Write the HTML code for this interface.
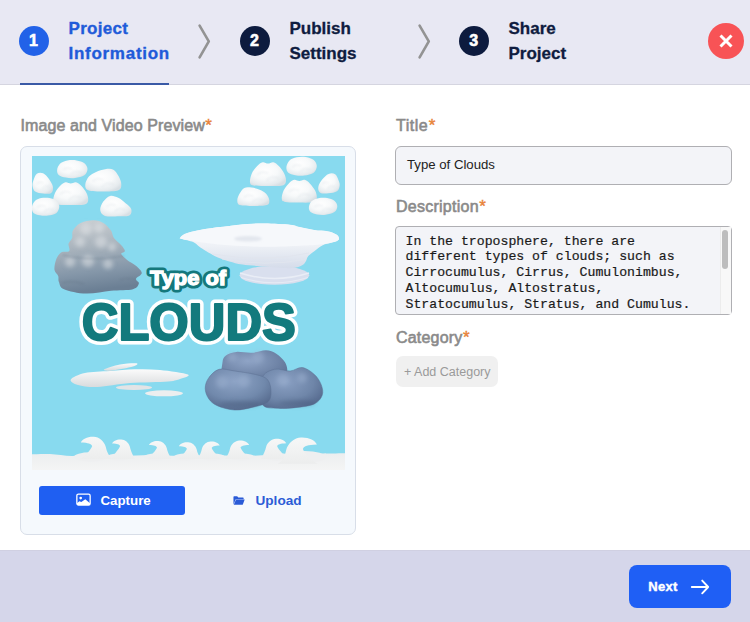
<!DOCTYPE html>
<html><head><meta charset="utf-8">
<style>
*{box-sizing:border-box;margin:0;padding:0}
html,body{width:750px;height:622px;overflow:hidden;background:#fff;font-family:"Liberation Sans",sans-serif}
.abs{position:absolute}
#hdr{left:0;top:0;width:750px;height:85px;background:#e8e8f3;border-bottom:1px solid #d5d5e0}
.circ{position:absolute;width:30px;height:30px;border-radius:50%;color:#fff;font-weight:bold;font-size:16px;line-height:30px;text-align:center;-webkit-text-stroke:0.6px #fff}
.step{position:absolute;font-weight:bold;font-size:17px;line-height:24.5px;white-space:nowrap;-webkit-text-stroke:0.3px currentColor}
.lbl{position:absolute;font-weight:normal;font-size:16px;line-height:20px;color:#8a8a8a;white-space:nowrap;-webkit-text-stroke:0.6px #8a8a8a}
.lbl i{font-style:normal;color:#e8843a;-webkit-text-stroke:0.4px #e8843a;font-size:17px;margin-left:0.5px}
#ftr{left:0;top:550px;width:750px;height:72px;background:#d5d6ea;border-top:1px solid #d0d0e2}
</style></head><body>
<div id="hdr" class="abs"></div>
<div class="circ" style="left:18.5px;top:25.5px;background:#2262e8">1</div>
<div class="step" style="left:68.5px;top:17px;color:#1f5bd9;-webkit-text-stroke:0.35px #1f5bd9"><span style="letter-spacing:0.3px">Project</span><br><span style="letter-spacing:0.72px">Information</span></div>
<div class="abs" style="left:20px;top:83px;width:149px;height:2px;background:#3a5aa6"></div>
<svg class="abs" style="left:196px;top:22px" width="16" height="38" viewBox="0 0 16 38"><path d="M3.6 3.6 L12.8 19.3 L3.6 35.4" fill="none" stroke="#939393" stroke-width="2.6" stroke-linecap="round" stroke-linejoin="round"/></svg>
<div class="circ" style="left:239.5px;top:25.5px;background:#0d1b3e">2</div>
<div class="step" style="left:289.5px;top:17px;color:#0f1c3f">Publish<br>Settings</div>
<svg class="abs" style="left:416px;top:22px" width="16" height="38" viewBox="0 0 16 38"><path d="M3.6 3.6 L12.8 19.3 L3.6 35.4" fill="none" stroke="#939393" stroke-width="2.6" stroke-linecap="round" stroke-linejoin="round"/></svg>
<div class="circ" style="left:458.8px;top:25.5px;background:#0d1b3e">3</div>
<div class="step" style="left:508.5px;top:17px;color:#0f1c3f">Share<br>Project</div>
<div class="abs" style="left:707.8px;top:23px;width:36px;height:36px;border-radius:50%;background:#f85356"></div>
<svg class="abs" style="left:707.8px;top:23px" width="36" height="36" viewBox="0 0 36 36"><path d="M12.5 12.5 L23.5 23.5 M23.5 12.5 L12.5 23.5" stroke="#fff" stroke-width="3" stroke-linecap="butt"/></svg>

<div class="lbl" style="left:20.5px;top:115.5px"><span style="letter-spacing:0.1px">Image and Video Preview</span><i>*</i></div>
<div class="abs" style="left:20px;top:146px;width:336px;height:389px;border:1px solid #d8dee8;border-radius:7px;background:#f5f9fd"></div>
<div class="abs" id="pic" style="left:32px;top:156px;width:313px;height:314px;overflow:hidden"><svg width="313" height="314" viewBox="32 156 313 314">
<defs>
<linearGradient id="gw" x1="0" y1="0" x2="0" y2="1"><stop offset="0" stop-color="#ffffff"/><stop offset="0.55" stop-color="#f7f9fa"/><stop offset="1" stop-color="#d9dfe4"/></linearGradient>
<linearGradient id="gcb" x1="0" y1="0" x2="0.15" y2="1"><stop offset="0" stop-color="#cdd1d4"/><stop offset="0.4" stop-color="#aab4bd"/><stop offset="0.75" stop-color="#8597a9"/><stop offset="1" stop-color="#6b7f94"/></linearGradient>
<linearGradient id="gs" x1="0" y1="0" x2="0" y2="1"><stop offset="0" stop-color="#fafbfd"/><stop offset="0.5" stop-color="#eef1f6"/><stop offset="1" stop-color="#d5dcea"/></linearGradient>
<radialGradient id="gdk1" cx="0.4" cy="0.35" r="0.7"><stop offset="0" stop-color="#8fa4c6"/><stop offset="1" stop-color="#5f7497"/></radialGradient><radialGradient id="gdk2" cx="0.4" cy="0.35" r="0.75"><stop offset="0" stop-color="#8aa0c3"/><stop offset="0.6" stop-color="#6f86a9"/><stop offset="1" stop-color="#52668a"/></radialGradient><radialGradient id="gdk3" cx="0.45" cy="0.3" r="0.75"><stop offset="0" stop-color="#8ea4c6"/><stop offset="0.6" stop-color="#7189ac"/><stop offset="1" stop-color="#53678a"/></radialGradient><linearGradient id="gdk" x1="0" y1="0" x2="0.1" y2="1"><stop offset="0" stop-color="#8a9dbb"/><stop offset="0.5" stop-color="#687ea0"/><stop offset="1" stop-color="#4b5f80"/></linearGradient>
<linearGradient id="gst" x1="0" y1="0" x2="0" y2="1"><stop offset="0" stop-color="#fbfbfb"/><stop offset="1" stop-color="#d9dbdd"/></linearGradient>
<linearGradient id="gb" x1="0" y1="0" x2="0" y2="1"><stop offset="0" stop-color="#eceeef"/><stop offset="1" stop-color="#f5f5f5"/></linearGradient>
<linearGradient id="gwv" x1="0" y1="0" x2="0" y2="1"><stop offset="0" stop-color="#f6f7f7"/><stop offset="1" stop-color="#eceded"/></linearGradient>
<radialGradient id="gw2" cx="0.42" cy="0.38" r="0.68"><stop offset="0" stop-color="#ffffff"/><stop offset="0.5" stop-color="#f7f9fa"/><stop offset="0.85" stop-color="#e6ebee"/><stop offset="1" stop-color="#d8dfe4"/></radialGradient>
<filter id="bl" x="-50%" y="-50%" width="200%" height="200%"><feGaussianBlur stdDeviation="2.2"/></filter><filter id="bl1" x="-50%" y="-50%" width="200%" height="200%"><feGaussianBlur stdDeviation="0.8"/></filter>
<g id="cu"><circle cx="8" cy="16" r="7"/><circle cx="17" cy="10" r="9"/><circle cx="28" cy="11" r="8"/><circle cx="33" cy="17" r="6.5"/><ellipse cx="20" cy="19" rx="19" ry="6"/></g>
</defs>
<rect x="32" y="156" width="313" height="314" fill="#88daef"/>
<path d="M57.1,169.9 C57.3,167.9 58.5,165.2 60.2,163.6 C61.9,162.0 64.6,161.1 67.3,160.5 C70.1,160.0 73.8,159.9 76.7,160.4 C79.5,160.8 82.6,161.8 84.4,163.2 C86.2,164.7 87.5,167.0 87.5,169.0 C87.5,171.0 86.5,173.8 84.4,175.3 C82.3,176.8 78.2,177.6 75.1,178.0 C72.0,178.4 68.5,178.1 65.8,177.6 C63.1,177.2 60.4,176.6 59.0,175.3 C57.5,174.0 56.9,171.9 57.1,169.9Z" fill="url(#gw2)"/>
<g opacity="0.45" fill="none" stroke="#d3dbe1" stroke-width="1.2" filter="url(#bl1)"><path d="M62.7,169.9 q4.6,-3.6 9.3,-0.9"/><path d="M70.5,174.4 q4.6,-4.5 10.8,-1.8"/></g>
<path d="M33.2,181.0 C33.9,178.9 35.2,174.9 36.8,173.7 C38.4,172.4 41.1,172.4 43.1,173.2 C45.1,174.1 47.3,176.6 49.0,178.9 C50.6,181.2 52.6,184.5 53.0,186.9 C53.3,189.2 52.7,191.8 51.1,193.0 C49.4,194.1 45.8,193.8 43.1,193.6 C40.4,193.4 36.9,192.7 35.1,191.5 C33.4,190.3 32.9,188.0 32.6,186.2 C32.3,184.5 32.5,183.1 33.2,181.0Z" fill="url(#gw2)"/>
<g opacity="0.45" fill="none" stroke="#d3dbe1" stroke-width="1.2" filter="url(#bl1)"><path d="M36.8,184.2 q3.1,-4.2 6.3,-1.1"/><path d="M42.1,189.4 q3.1,-5.2 7.3,-2.1"/></g>
<path d="M53.2,201.4 C52.9,199.5 53.8,195.6 55.0,193.0 C56.1,190.4 58.5,187.6 60.2,185.8 C62.0,184.0 63.7,182.6 65.5,182.2 C67.2,181.8 69.0,183.4 70.7,183.4 C72.5,183.4 74.2,181.8 76.0,182.2 C77.7,182.6 79.5,184.0 81.2,185.8 C83.0,187.6 85.3,190.6 86.5,193.0 C87.6,195.4 88.5,198.3 88.2,200.2 C87.9,202.1 87.6,203.7 84.7,204.5 C81.8,205.3 75.4,205.0 70.7,205.0 C66.0,205.0 59.6,205.1 56.7,204.5 C53.8,203.9 53.5,203.3 53.2,201.4Z" fill="url(#gw2)"/>
<g opacity="0.45" fill="none" stroke="#d3dbe1" stroke-width="1.2" filter="url(#bl1)"><path d="M60.2,194.2 q5.2,-4.8 10.5,-1.2"/><path d="M69.0,200.2 q5.2,-6.0 12.2,-2.4"/></g>
<path d="M85.3,184.6 C85.4,182.3 87.1,178.7 88.9,176.6 C90.7,174.4 93.4,173.2 96.1,171.9 C98.8,170.7 102.2,169.6 105.1,169.2 C108.0,168.8 111.1,168.4 113.4,169.7 C115.7,170.9 117.5,174.1 118.8,176.6 C120.1,179.0 121.4,182.3 121.3,184.6 C121.2,186.9 121.4,189.2 118.4,190.3 C115.4,191.5 108.3,191.5 103.3,191.5 C98.3,191.5 91.2,191.5 88.2,190.3 C85.2,189.2 85.2,186.9 85.3,184.6Z" fill="url(#gw2)"/>
<g opacity="0.45" fill="none" stroke="#d3dbe1" stroke-width="1.2" filter="url(#bl1)"><path d="M92.5,181.2 q5.4,-4.6 10.8,-1.2"/><path d="M101.5,186.9 q5.4,-5.8 12.6,-2.3"/></g>
<path d="M31.9,207.5 C32.0,205.6 33.1,202.8 34.7,201.2 C36.2,199.6 38.6,198.7 41.1,198.1 C43.6,197.6 46.9,197.5 49.5,198.0 C52.1,198.4 54.9,199.4 56.5,200.8 C58.1,202.3 59.3,204.6 59.3,206.6 C59.3,208.6 58.4,211.4 56.5,212.9 C54.6,214.4 50.9,215.2 48.1,215.6 C45.3,216.0 42.1,215.7 39.7,215.2 C37.3,214.8 34.8,214.2 33.5,212.9 C32.2,211.6 31.7,209.4 31.9,207.5Z" fill="url(#gw2)"/>
<g opacity="0.45" fill="none" stroke="#d3dbe1" stroke-width="1.2" filter="url(#bl1)"><path d="M36.9,207.5 q4.2,-3.6 8.4,-0.9"/><path d="M43.9,212.0 q4.2,-4.5 9.8,-1.8"/></g>
<path d="M100.2,210.0 C99.9,207.6 101.6,203.9 103.3,201.6 C105.0,199.3 107.6,196.6 110.1,195.9 C112.6,195.3 115.6,196.6 118.2,197.8 C120.8,199.0 123.5,201.4 125.6,203.3 C127.8,205.1 130.5,207.0 131.2,209.0 C131.9,210.9 131.7,214.0 129.7,215.2 C127.6,216.5 122.9,216.2 118.8,216.3 C114.7,216.4 108.0,216.9 104.9,215.9 C101.8,214.8 100.5,212.4 100.2,210.0Z" fill="url(#gw2)"/>
<g opacity="0.45" fill="none" stroke="#d3dbe1" stroke-width="1.2" filter="url(#bl1)"><path d="M106.4,206.9 q4.6,-4.2 9.3,-1.1"/><path d="M114.2,212.1 q4.6,-5.2 10.8,-2.1"/></g>
<path d="M250.0,182.2 C249.7,180.2 250.6,176.2 251.8,173.5 C253.0,170.8 255.4,167.9 257.2,166.0 C259.0,164.1 260.8,162.7 262.6,162.2 C264.4,161.8 266.2,163.5 268.0,163.5 C269.8,163.5 271.6,161.8 273.4,162.2 C275.2,162.7 277.0,164.1 278.8,166.0 C280.6,167.9 283.0,171.0 284.2,173.5 C285.4,176.0 286.3,179.0 286.0,181.0 C285.7,183.0 285.4,184.7 282.4,185.5 C279.4,186.3 272.8,186.0 268.0,186.0 C263.2,186.0 256.6,186.1 253.6,185.5 C250.6,184.9 250.3,184.2 250.0,182.2Z" fill="url(#gw2)"/>
<g opacity="0.45" fill="none" stroke="#d3dbe1" stroke-width="1.2" filter="url(#bl1)"><path d="M257.2,174.8 q5.4,-5.0 10.8,-1.2"/><path d="M266.2,181.0 q5.4,-6.2 12.6,-2.5"/></g>
<path d="M286.4,167.0 C286.6,165.0 287.8,162.0 289.5,160.4 C291.2,158.8 293.9,157.7 296.7,157.2 C299.4,156.6 303.1,156.5 305.9,157.0 C308.8,157.5 311.9,158.5 313.7,160.0 C315.5,161.5 316.8,164.0 316.8,166.1 C316.8,168.2 315.8,171.2 313.7,172.8 C311.6,174.3 307.5,175.2 304.4,175.6 C301.3,176.0 297.8,175.7 295.1,175.2 C292.4,174.7 289.7,174.1 288.3,172.8 C286.8,171.4 286.2,169.1 286.4,167.0Z" fill="url(#gw2)"/>
<g opacity="0.45" fill="none" stroke="#d3dbe1" stroke-width="1.2" filter="url(#bl1)"><path d="M292.0,167.0 q4.6,-3.8 9.3,-1.0"/><path d="M299.8,171.8 q4.6,-4.8 10.8,-1.9"/></g>
<path d="M338.9,181.3 C338.2,179.3 336.9,175.5 335.2,174.3 C333.5,173.1 330.7,173.1 328.6,173.9 C326.5,174.7 324.2,177.1 322.4,179.3 C320.7,181.5 318.6,184.7 318.3,186.9 C317.9,189.1 318.5,191.6 320.2,192.7 C322.0,193.8 325.8,193.5 328.6,193.3 C331.4,193.1 335.1,192.5 337.0,191.3 C338.8,190.1 339.3,188.0 339.6,186.3 C339.9,184.6 339.7,183.3 338.9,181.3Z" fill="url(#gw2)"/>
<g opacity="0.45" fill="none" stroke="#d3dbe1" stroke-width="1.2" filter="url(#bl1)"><path d="M322.0,184.3 q3.3,-4.0 6.6,-1.0"/><path d="M327.5,189.3 q3.3,-5.0 7.7,-2.0"/></g>
<path d="M281.8,199.0 C281.5,197.1 282.4,193.2 283.6,190.6 C284.7,188.0 287.1,185.2 288.8,183.4 C290.6,181.6 292.3,180.2 294.1,179.8 C295.8,179.4 297.6,181.0 299.3,181.0 C301.1,181.0 302.8,179.4 304.6,179.8 C306.3,180.2 308.1,181.6 309.8,183.4 C311.6,185.2 313.9,188.2 315.1,190.6 C316.2,193.0 317.1,195.9 316.8,197.8 C316.5,199.7 316.2,201.3 313.3,202.1 C310.4,202.9 304.0,202.6 299.3,202.6 C294.6,202.6 288.2,202.7 285.3,202.1 C282.4,201.5 282.1,200.9 281.8,199.0Z" fill="url(#gw2)"/>
<g opacity="0.45" fill="none" stroke="#d3dbe1" stroke-width="1.2" filter="url(#bl1)"><path d="M288.8,191.8 q5.2,-4.8 10.5,-1.2"/><path d="M297.6,197.8 q5.2,-6.0 12.2,-2.4"/></g>
<path d="M269.3,200.3 C269.2,198.4 267.7,195.4 266.1,193.7 C264.5,191.9 262.1,190.9 259.7,189.8 C257.3,188.8 254.3,187.9 251.7,187.6 C249.1,187.3 246.4,186.9 244.3,187.9 C242.3,189.0 240.7,191.6 239.5,193.7 C238.4,195.7 237.2,198.4 237.3,200.3 C237.4,202.2 237.2,204.1 239.9,205.1 C242.5,206.0 248.8,206.0 253.3,206.0 C257.8,206.0 264.1,206.0 266.7,205.1 C269.4,204.1 269.4,202.2 269.3,200.3Z" fill="url(#gw2)"/>
<g opacity="0.45" fill="none" stroke="#d3dbe1" stroke-width="1.2" filter="url(#bl1)"><path d="M243.7,197.4 q4.8,-3.8 9.6,-1.0"/><path d="M251.7,202.2 q4.8,-4.8 11.2,-1.9"/></g>
<path d="M308.9,207.0 C309.1,205.2 310.2,202.6 311.8,201.1 C313.4,199.6 315.9,198.7 318.4,198.2 C321.0,197.7 324.5,197.6 327.2,198.0 C329.8,198.5 332.7,199.4 334.4,200.8 C336.1,202.1 337.3,204.3 337.3,206.2 C337.3,208.1 336.3,210.7 334.4,212.1 C332.5,213.6 328.6,214.3 325.7,214.7 C322.8,215.1 319.5,214.8 317.0,214.4 C314.5,213.9 312.0,213.4 310.6,212.1 C309.3,210.9 308.7,208.9 308.9,207.0Z" fill="url(#gw2)"/>
<g opacity="0.45" fill="none" stroke="#d3dbe1" stroke-width="1.2" filter="url(#bl1)"><path d="M314.1,207.0 q4.3,-3.4 8.7,-0.9"/><path d="M321.4,211.3 q4.3,-4.2 10.1,-1.7"/></g>
<path d="M72.9,230.5 C74.2,228.1 76.8,224.9 80.2,223.2 C83.6,221.5 89.5,220.3 93.4,220.3 C97.3,220.3 100.8,221.5 103.7,223.2 C106.6,224.9 109.3,228.1 111.0,230.5 C112.7,232.9 112.2,235.5 113.9,237.9 C115.6,240.3 119.5,243.0 121.3,245.2 C123.1,247.4 124.9,249.5 124.9,251.0 C124.9,252.5 120.9,252.5 121.3,254.0 C121.7,255.5 124.7,257.9 127.1,259.9 C129.5,261.8 133.4,263.5 135.9,265.7 C138.4,267.9 141.8,270.8 141.8,273.0 C141.8,275.2 136.4,277.2 135.9,278.9 C135.4,280.6 139.4,281.6 138.9,283.3 C138.4,285.0 137.7,288.0 133.0,289.2 C128.3,290.4 118.8,290.0 111.0,290.7 C103.2,291.4 93.8,293.9 86.0,293.6 C78.2,293.4 68.5,291.1 64.0,289.2 C59.5,287.2 59.9,284.1 58.9,281.9 C57.9,279.7 58.9,278.0 58.2,276.0 C57.5,274.0 54.9,272.8 54.5,270.1 C54.1,267.4 54.9,262.8 56.0,259.9 C57.1,257.0 58.9,254.0 61.1,252.5 C63.3,251.0 68.0,252.5 69.2,251.0 C70.4,249.5 68.0,245.9 68.5,243.7 C69.0,241.5 71.4,240.1 72.1,237.9 C72.8,235.7 71.6,232.9 72.9,230.5Z" fill="url(#gcb)"/>
<g opacity="0.5" fill="#e2e5e8" filter="url(#bl)"><circle cx="86" cy="229" r="6"/><circle cx="99" cy="228" r="5"/><circle cx="80" cy="242" r="5"/><circle cx="101" cy="242" r="6"/><circle cx="112" cy="247" r="4"/><circle cx="70" cy="262" r="5"/><circle cx="88" cy="261" r="6"/><circle cx="108" cy="264" r="5"/></g>
<g opacity="0.4" fill="none" stroke="#5f7081" stroke-width="1.2" filter="url(#bl1)"><path d="M63,255 Q90,262 124,256"/><path d="M62,283 Q72,280 84,284"/><path d="M120,280 Q128,277 137,280"/></g>
<ellipse cx="274.4" cy="275.3" rx="34.8" ry="9.4" fill="#d9dfee"/><path d="M240,273 Q274,284 309,273" fill="none" stroke="#e9edf6" stroke-width="1.5"/><path d="M241,277.5 Q274,288 308,277.5" fill="none" stroke="#e6eaf4" stroke-width="1.2"/>
<path d="M180.4,237.3 C181.2,236.3 183.0,234.5 187.1,233.1 C191.2,231.7 198.2,230.1 205.2,228.9 C212.2,227.7 222.3,226.7 229.3,225.9 C236.3,225.1 241.5,224.4 247.4,224.0 C253.3,223.6 257.9,223.3 265.0,223.4 C272.1,223.5 284.4,224.1 290.2,224.7 C296.0,225.3 295.8,226.2 299.8,227.1 C303.8,228.0 309.7,229.4 314.3,230.1 C318.9,230.8 323.9,230.6 327.5,231.3 C331.1,232.0 334.1,233.2 336.0,234.3 C337.9,235.4 338.8,236.8 339.0,237.9 C339.2,239.0 338.5,240.1 337.2,240.9 C335.9,241.7 333.6,242.0 331.2,242.7 C328.8,243.4 325.5,243.8 322.7,245.2 C319.9,246.6 316.7,249.4 314.3,251.2 C311.9,253.0 309.7,254.4 308.3,256.0 C306.9,257.6 306.9,259.5 306.0,261.0 C305.1,262.5 304.6,263.7 303.0,264.8 C301.4,265.9 299.3,266.9 296.2,267.5 C293.1,268.1 289.3,268.3 284.1,268.1 C278.9,267.9 271.9,267.1 265.0,266.5 C258.1,265.9 248.4,265.4 242.5,264.5 C236.6,263.6 233.5,262.6 229.3,261.4 C225.1,260.2 221.0,258.9 217.2,257.2 C213.4,255.5 209.4,253.0 206.4,251.2 C203.4,249.4 201.3,247.9 199.1,246.4 C196.9,244.9 195.9,243.3 193.1,242.1 C190.3,240.9 184.3,239.9 182.2,239.1 C180.1,238.3 179.6,238.3 180.4,237.3Z" fill="url(#gs)"/>
<path d="M180.6,237.5 C181.4,236.6 183.0,234.7 187.1,233.3 C191.2,231.9 198.2,230.3 205.2,229.1 C212.2,227.9 222.3,226.9 229.3,226.1 C236.3,225.3 241.5,224.6 247.4,224.2 C253.3,223.8 257.9,223.5 265.0,223.6 C272.1,223.7 284.4,224.3 290.2,224.9 C296.0,225.5 295.8,226.4 299.8,227.3 C303.8,228.2 309.7,229.6 314.3,230.3 C318.9,231.0 323.9,230.8 327.5,231.5 C331.1,232.2 334.1,233.4 336.0,234.5 C337.9,235.6 338.6,236.9 338.8,237.9 C339.0,238.9 339.8,239.6 337.0,240.7 C334.2,241.8 328.2,243.5 322.0,244.3 C315.8,245.2 309.5,245.4 300.0,245.8 C290.5,246.2 276.8,246.9 265.0,246.8 C253.2,246.7 239.0,246.0 229.0,245.3 C219.0,244.6 212.8,243.9 205.0,242.8 C197.2,241.8 186.1,239.9 182.0,239.0 C177.9,238.1 179.8,238.4 180.6,237.5Z" fill="#f6f8fb"/>
<ellipse cx="248" cy="238.8" rx="14" ry="2.8" fill="#e3e7ee" filter="url(#bl1)"/><path d="M212,254 Q266,263 309,253" fill="none" stroke="#e1e5ee" stroke-width="1"/><path d="M222,259 Q266,267 305,259.5" fill="none" stroke="#e1e5ee" stroke-width="0.9"/>
<path d="M70.8,379.5 C72.0,377.5 78.5,374.4 85.0,373.0 C91.5,371.6 101.7,371.6 110.0,371.0 C118.3,370.4 126.4,369.5 134.7,369.3 C143.0,369.1 151.1,369.1 160.0,370.0 C168.9,370.9 184.6,373.0 187.9,374.5 C191.2,376.0 183.3,377.9 180.0,379.0 C176.7,380.1 176.6,380.7 168.3,381.4 C160.0,382.1 141.8,382.1 130.0,383.0 C118.2,383.9 106.0,386.7 97.3,387.0 C88.6,387.3 82.4,386.2 78.0,385.0 C73.6,383.8 69.6,381.5 70.8,379.5Z" fill="url(#gst)"/>
<path d="M104.0,369.5 C105.3,368.5 114.6,365.5 120.0,364.5 C125.4,363.5 134.3,363.0 136.5,363.3 C138.7,363.6 137.1,365.3 133.0,366.5 C128.9,367.7 116.8,370.0 112.0,370.5 C107.2,371.0 102.7,370.5 104.0,369.5Z" fill="url(#gst)"/>
<ellipse cx="134" cy="387.5" rx="18" ry="2.6" fill="#e2e4e6"/><ellipse cx="164" cy="393.3" rx="19" ry="3" fill="#eceeef"/>
<path d="M222.5,362.3 C222.8,358.5 223.7,357.1 226.0,355.4 C228.3,353.7 232.1,352.3 236.4,351.9 C240.7,351.5 247.1,353.1 252.0,352.8 C256.9,352.5 261.8,350.1 265.9,350.2 C269.9,350.3 273.1,351.7 276.3,353.7 C279.5,355.7 283.2,359.2 285.0,362.3 C286.8,365.4 287.8,369.1 287.0,372.0 C286.2,374.9 286.2,378.5 280.0,380.0 C273.8,381.5 259.3,381.3 250.0,381.0 C240.7,380.7 228.6,381.1 224.0,378.0 C219.4,374.9 222.2,366.1 222.5,362.3Z" fill="url(#gdk1)"/>
<path d="M262.0,378.0 C264.1,372.2 269.8,370.5 274.5,369.3 C279.2,368.1 285.5,371.3 290.1,371.0 C294.7,370.7 298.2,366.9 302.3,367.5 C306.4,368.1 311.2,371.6 314.4,374.5 C317.6,377.4 320.0,381.4 321.3,384.9 C322.6,388.4 323.4,392.1 322.2,395.3 C321.0,398.5 318.6,401.9 314.4,403.9 C310.2,405.9 303.2,406.7 297.1,407.4 C291.0,408.1 283.9,408.9 278.0,408.3 C272.1,407.7 264.7,409.1 262.0,404.0 C259.3,398.9 259.9,383.8 262.0,378.0Z" fill="url(#gdk2)" stroke="#5d7193" stroke-width="0.5"/>
<path d="M205.2,388.3 C205.2,384.8 206.4,381.1 208.7,377.9 C211.0,374.7 214.8,370.4 219.1,369.3 C223.4,368.2 228.6,370.1 234.7,371.0 C240.8,371.9 250.0,373.1 255.5,374.5 C261.0,375.9 265.0,376.8 267.6,379.7 C270.2,382.6 271.0,388.1 271.0,391.8 C271.0,395.6 270.8,399.6 267.6,402.2 C264.4,404.8 257.5,406.1 252.0,407.4 C246.5,408.7 240.5,410.3 234.7,410.0 C228.9,409.7 221.6,407.6 217.3,405.7 C213.0,403.8 210.7,401.6 208.7,398.7 C206.7,395.8 205.2,391.8 205.2,388.3Z" fill="url(#gdk3)" stroke="#5d7193" stroke-width="0.5"/>
<g opacity="0.45" fill="#9fb3d2" filter="url(#bl)"><circle cx="232" cy="357" r="5"/><circle cx="258" cy="357" r="6"/><circle cx="222" cy="382" r="6"/><circle cx="244" cy="381" r="6"/><circle cx="283" cy="380" r="6"/><circle cx="302" cy="378" r="5"/></g>
<g opacity="0.35" fill="#3f5373" filter="url(#bl)"><ellipse cx="240" cy="404" rx="20" ry="3"/><ellipse cx="297" cy="403" rx="18" ry="3"/></g>
<text x="150" y="284.7" font-family="Liberation Sans" font-weight="bold" font-size="20.5" fill="#fff" stroke="#14787c" stroke-width="7" stroke-linejoin="round" paint-order="stroke" textLength="76" lengthAdjust="spacingAndGlyphs">Type of</text>
<text x="150" y="284.7" font-family="Liberation Sans" font-weight="bold" font-size="20.5" fill="#fff" stroke="#fff" stroke-width="1.3" textLength="76" lengthAdjust="spacingAndGlyphs">Type of</text>
<text x="81.8" y="340.4" font-family="Liberation Sans" font-weight="bold" font-size="51" fill="#fff" stroke="#fff" stroke-width="9" stroke-linejoin="round" textLength="214" lengthAdjust="spacingAndGlyphs">CLOUDS</text>
<text x="81.8" y="340.4" font-family="Liberation Sans" font-weight="bold" font-size="51" fill="#137a7d" stroke="#137a7d" stroke-width="2" stroke-linejoin="round" textLength="214" lengthAdjust="spacingAndGlyphs">CLOUDS</text>
<path d="M32.0,455.0 C-17.2,455.2 43.3,453.8 50.0,454.0 C56.7,454.2 64.5,456.0 72.0,456.0 C79.5,456.0 87.0,454.0 95.0,454.0 C103.0,454.0 110.8,455.8 120.0,456.0 C129.2,456.2 140.0,455.0 150.0,455.0 C160.0,455.0 170.0,456.0 180.0,456.0 C190.0,456.0 200.0,455.0 210.0,455.0 C220.0,455.0 230.0,456.0 240.0,456.0 C250.0,456.0 260.0,455.3 270.0,455.0 C280.0,454.7 287.5,454.3 300.0,454.0 C312.5,453.7 389.7,452.8 345.0,453.0 L345,471 L32,471 Z" fill="url(#gb)"/>
<ellipse cx="90.6" cy="457" rx="16.8" ry="4.7" fill="#eeeff0"/>
<ellipse cx="119.0" cy="457" rx="12.0" ry="3.4" fill="#eeeff0"/>
<ellipse cx="155.9" cy="457" rx="12.0" ry="3.4" fill="#eeeff0"/>
<ellipse cx="185.8" cy="457" rx="12.0" ry="3.4" fill="#eeeff0"/>
<ellipse cx="212.8" cy="457" rx="12.0" ry="3.4" fill="#eeeff0"/>
<ellipse cx="241.7" cy="457" rx="12.8" ry="3.6" fill="#eeeff0"/>
<ellipse cx="278.4" cy="457" rx="13.6" ry="3.8" fill="#eeeff0"/>
<ellipse cx="304.9" cy="457" rx="20.8" ry="5.9" fill="#eeeff0"/>
<path d="M80.1,459.0 C84.3,455.9 90.6,450.6 92.2,445.9 C91.1,443.8 88.5,442.8 80.9,442.5 C82.2,439.1 87.5,436.5 93.8,436.8 C99.0,437.0 104.2,441.2 105.8,447.0 C106.9,451.7 108.5,455.9 112.7,459.0Z" fill="url(#gwv)"/>
<path d="M111.5,459.0 C114.5,453.1 119.0,449.4 120.1,446.0 C119.4,444.5 117.5,443.7 112.1,443.5 C113.0,441.1 116.8,439.2 121.2,439.5 C125.0,439.6 128.8,442.6 129.9,446.7 C130.6,450.1 131.8,453.1 134.8,459.0Z" fill="url(#gwv)"/>
<path d="M148.4,459.0 C151.4,454.7 155.9,450.9 157.0,447.6 C156.3,446.1 154.4,445.3 149.0,445.1 C149.9,442.7 153.7,440.8 158.2,441.1 C161.9,441.2 165.7,444.2 166.8,448.3 C167.5,451.7 168.7,454.7 171.7,459.0Z" fill="url(#gwv)"/>
<path d="M178.3,459.0 C181.3,455.8 185.8,452.1 186.9,448.7 C186.2,447.2 184.3,446.4 178.9,446.2 C179.8,443.8 183.6,441.9 188.1,442.2 C191.8,442.3 195.6,445.3 196.7,449.4 C197.4,452.8 198.6,455.8 201.6,459.0Z" fill="url(#gwv)"/>
<path d="M220.3,459.0 C217.3,455.2 212.8,451.4 211.7,448.1 C212.4,446.6 214.3,445.8 219.7,445.6 C218.8,443.2 215.1,441.3 210.6,441.6 C206.8,441.7 203.1,444.7 201.9,448.8 C201.2,452.2 200.1,455.2 197.1,459.0Z" fill="url(#gwv)"/>
<path d="M249.7,459.0 C246.5,455.1 241.7,451.1 240.5,447.5 C241.3,445.9 243.3,445.1 249.1,444.9 C248.1,442.3 244.1,440.3 239.3,440.5 C235.3,440.7 231.3,443.9 230.1,448.3 C229.3,451.9 228.1,455.1 224.9,459.0Z" fill="url(#gwv)"/>
<path d="M286.9,459.0 C283.5,454.2 278.4,449.9 277.1,446.1 C278.0,444.4 280.1,443.6 286.2,443.3 C285.2,440.6 280.9,438.5 275.8,438.7 C271.6,438.9 267.3,442.3 266.1,447.0 C265.2,450.8 263.9,454.2 260.6,459.0Z" fill="url(#gwv)"/>
<path d="M317.9,463.8 C312.7,461.2 304.9,454.7 302.9,448.9 C304.2,446.2 307.5,444.9 316.9,444.6 C315.3,440.4 308.8,437.2 301.0,437.5 C294.5,437.8 288.0,443.0 286.1,450.2 C284.8,456.0 282.8,461.2 277.6,463.8Z" fill="url(#gwv)"/>
</svg></div>
<div class="abs" style="left:39px;top:486px;width:146px;height:29px;background:#1f5ff2;border-radius:3px"></div>
<svg class="abs" style="left:76px;top:493px" width="15" height="13" viewBox="0 0 15 13"><rect x="0.85" y="1.05" width="13.3" height="11" fill="none" stroke="#fff" stroke-width="1.3" rx="1.6"/><circle cx="4.7" cy="5.1" r="1.35" fill="#fff"/><path d="M1 10.2 L3.4 8.2 L5.3 9 L9.3 6.3 L14 10.2 L14 12 L1 12 Z" fill="#fff"/></svg>
<div class="abs" style="left:100.5px;top:492px;font-weight:bold;font-size:13.3px;line-height:18px;color:#fff">Capture</div>
<svg class="abs" style="left:233.3px;top:495.7px" width="12" height="9" viewBox="0 0 13 10" preserveAspectRatio="none"><path d="M0.5 1 Q0.5 0.3 1.2 0.3 L4.5 0.3 L5.8 1.6 L10.8 1.6 Q11.5 1.6 11.5 2.3 L11.5 3.5 L3 3.5 L0.5 9.5 Z" fill="#2a5bd7"/><path d="M3.3 4 L12.7 4 L10.5 9.7 L0.8 9.7 Z" fill="#2a5bd7"/></svg>
<div class="abs" style="left:255.5px;top:492px;font-weight:bold;font-size:13.6px;line-height:18px;color:#2c5cd6">Upload</div>

<div class="lbl" style="left:396px;top:115.5px"><span style="letter-spacing:0.5px">Title</span><i>*</i></div>
<div class="abs" style="left:395px;top:146px;width:337px;height:39px;border:1px solid #afafb3;border-radius:6px;background:#f3f4f8"></div>
<div class="abs" style="left:407px;top:156px;font-size:13.2px;line-height:18px;color:#222">Type of Clouds</div>

<div class="lbl" style="left:396px;top:196.5px"><span style="letter-spacing:0.25px">Description</span><i>*</i></div>
<div class="abs" style="left:395px;top:226px;width:337px;height:89px;border:1px solid #afafb3;border-radius:4px;background:#f3f4f8"></div>
<div class="abs" style="left:405.5px;top:233.7px;font-family:'Liberation Mono',monospace;font-size:13.2px;line-height:15.7px;color:#1a1a1a;white-space:pre;-webkit-text-stroke:0.2px #1a1a1a">In the troposphere, there are
different types of clouds; such as
Cirrocumulus, Cirrus, Cumulonimbus,
Altocumulus, Altostratus,
Stratocumulus, Stratus, and Cumulus.</div>
<div class="abs" style="left:719.5px;top:227px;width:11px;height:87px;background:#f8f8f8;border-left:1px solid #ececec"></div>
<div class="abs" style="left:722px;top:230px;width:6px;height:39px;background:#bdbdbd;border-radius:3px"></div>

<div class="lbl" style="left:396px;top:327.5px"><span style="letter-spacing:0.2px">Category</span><i>*</i></div>
<div class="abs" style="left:396px;top:356px;width:102px;height:31px;border-radius:7px;background:#f0f0f0"></div>
<div class="abs" style="left:404px;top:363px;font-size:12.5px;line-height:18px;color:#9a9a9a">+ Add Category</div>

<div id="ftr" class="abs"></div>
<div class="abs" style="left:629px;top:565px;width:102px;height:43px;border-radius:8px;background:#1f5ff5"></div>
<div class="abs" style="left:648.3px;top:578px;font-weight:bold;font-size:13px;letter-spacing:0.3px;line-height:18px;color:#fff;-webkit-text-stroke:0.4px #fff">Next</div>
<svg class="abs" style="left:689px;top:578px" width="22" height="18" viewBox="0 0 22 18"><path d="M2.8 9 L19.2 9 M13.2 2.6 L19.2 9 L13.2 15.3" fill="none" stroke="#fff" stroke-width="1.9" stroke-linecap="round" stroke-linejoin="round"/></svg>
</body></html>
